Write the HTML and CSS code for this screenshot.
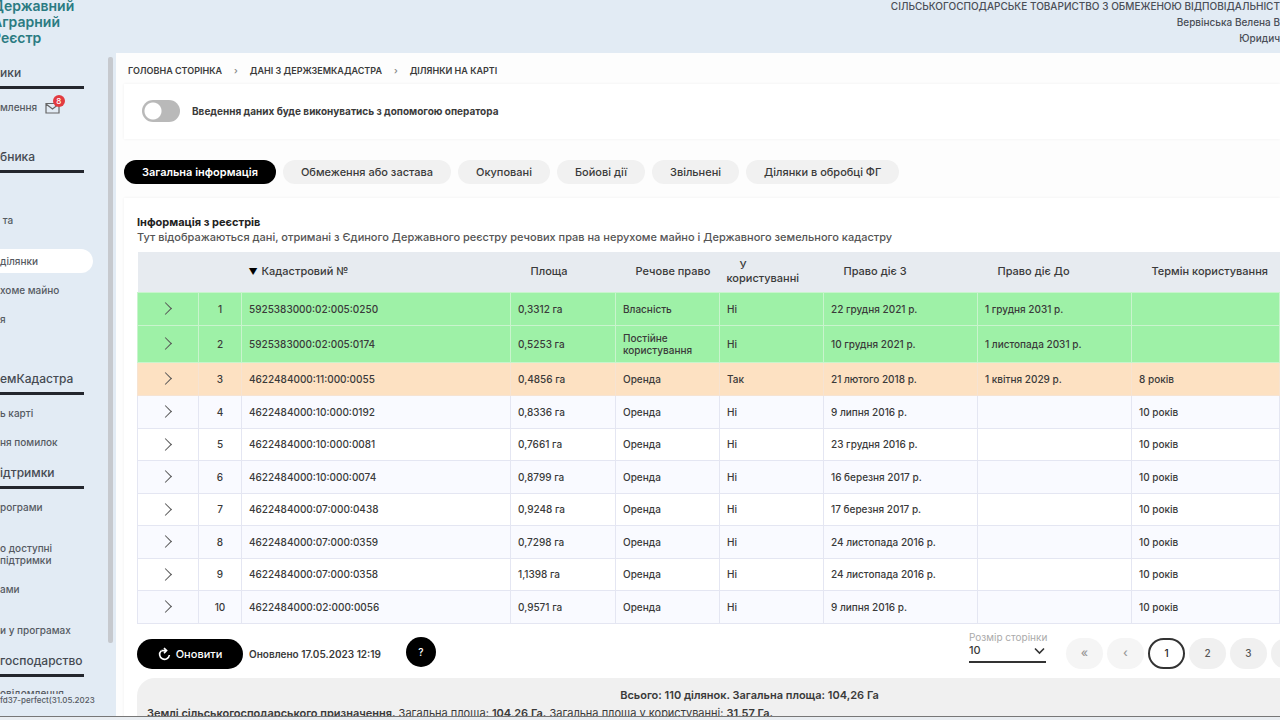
FILE: index.html
```html
<!DOCTYPE html>
<html lang="uk">
<head>
<meta charset="utf-8">
<title>Державний Аграрний Реєстр</title>
<link rel="stylesheet" href="styles.css">
</head>
<body>
<header class="header">
  <div class="brand">Державний<br>Аграрний<br>Реєстр</div>
  <div class="account">
    <div>СІЛЬСЬКОГОСПОДАРСЬКЕ ТОВАРИСТВО З ОБМЕЖЕНОЮ ВІДПОВІДАЛЬНІСТ</div>
    <div>Вервінська Велена В</div>
    <div>Юридич</div>
  </div>
</header>
<div class="body">
  <aside class="sidebar">
    <nav class="nav">
      <h2>ики</h2>
      <ul class="spaced">
        <li><a href="#">млення
          <span class="mail"><svg width="15" height="12" viewBox="0 0 15 12" fill="none" stroke="#666" stroke-width="1.2"><path d="M1 1.5h13v9.5H1zM1 2l6.5 5L14 2"/></svg><span class="badge">8</span></span></a></li>
      </ul>
      <h2>бника</h2>
      <ul>
        <li>&nbsp;</li>
        <li><a href="#">&nbsp;та<br>&nbsp;</a></li>
        <li><a class="active" href="#">ділянки</a></li>
        <li><a href="#">хоме майно</a></li>
        <li><a href="#">я</a></li>
        <li>&nbsp;</li>
      </ul>
      <h2>емКадастра</h2>
      <ul>
        <li><a href="#">ь карті</a></li>
        <li><a href="#">ня помилок</a></li>
      </ul>
      <h2>ідтримки</h2>
      <ul>
        <li><a href="#">рограми</a></li>
        <li><a href="#">&nbsp;<br>о доступні<br>підтримки</a></li>
        <li><a href="#">ами</a></li>
        <li><a href="#">&nbsp;<br>и у програмах</a></li>
      </ul>
      <h2>господарство</h2>
      <ul class="last">
        <li><a href="#">овідомлення</a></li>
      </ul>
    </nav>
    <div class="thumb"></div>
    <div class="version">fd37-perfect(31.05.2023</div>
  </aside>
  <main class="main">
    <nav class="crumbs">
      <a href="#">ГОЛОВНА СТОРІНКА</a><span>›</span><a href="#">ДАНІ З ДЕРЖЗЕМКАДАСТРА</a><span>›</span><a href="#">ДІЛЯНКИ НА КАРТІ</a>
    </nav>
    <section class="card operator">
      <label><input type="checkbox" class="switch">Введення даних буде виконуватись з допомогою оператора</label>
    </section>
    <div class="tabs">
      <button class="tab selected">Загальна інформація</button>
      <button class="tab">Обмеження або застава</button>
      <button class="tab">Окуповані</button>
      <button class="tab">Бойові дії</button>
      <button class="tab">Звільнені</button>
      <button class="tab">Ділянки в обробці ФГ</button>
    </div>
    <section class="card registry">
      <h1>Інформація з реєстрів</h1>
      <p class="lead">Тут відображаються дані, отримані з Єдиного Державного реєстру речових прав на нерухоме майно і Державного земельного кадастру</p>
      <table>
        <colgroup><col class="c-open"><col class="c-num"><col class="c-cad"><col class="c-area"><col class="c-kind"><col class="c-kind"><col class="c-date"><col class="c-date"><col></colgroup>
        <thead>
          <tr><th></th><th></th><th><i class="sort">▼</i>Кадастровий №</th><th><i class="sort"></i>Площа</th><th><i class="sort"></i>Речове право</th><th><i class="sort"></i>У<br>користуванні</th><th><i class="sort"></i>Право діє З</th><th><i class="sort"></i>Право діє До</th><th><i class="sort"></i>Термін користування</th></tr>
        </thead>
        <tbody>
          <tr class="own"><td><button class="open" aria-label="Розгорнути"></button></td><td>1</td><td>5925383000:02:005:0250</td><td>0,3312 га</td><td>Власність</td><td>Ні</td><td>22 грудня 2021 р.</td><td>1 грудня 2031 р.</td><td></td></tr>
          <tr class="own tall"><td><button class="open" aria-label="Розгорнути"></button></td><td>2</td><td>5925383000:02:005:0174</td><td>0,5253 га</td><td>Постійне користування</td><td>Ні</td><td>10 грудня 2021 р.</td><td>1 листопада 2031 р.</td><td></td></tr>
          <tr class="used"><td><button class="open" aria-label="Розгорнути"></button></td><td>3</td><td>4622484000:11:000:0055</td><td>0,4856 га</td><td>Оренда</td><td>Так</td><td>21 лютого 2018 р.</td><td>1 квітня 2029 р.</td><td>8 років</td></tr>
          <tr><td><button class="open" aria-label="Розгорнути"></button></td><td>4</td><td>4622484000:10:000:0192</td><td>0,8336 га</td><td>Оренда</td><td>Ні</td><td>9 липня 2016 р.</td><td></td><td>10 років</td></tr>
          <tr><td><button class="open" aria-label="Розгорнути"></button></td><td>5</td><td>4622484000:10:000:0081</td><td>0,7661 га</td><td>Оренда</td><td>Ні</td><td>23 грудня 2016 р.</td><td></td><td>10 років</td></tr>
          <tr><td><button class="open" aria-label="Розгорнути"></button></td><td>6</td><td>4622484000:10:000:0074</td><td>0,8799 га</td><td>Оренда</td><td>Ні</td><td>16 березня 2017 р.</td><td></td><td>10 років</td></tr>
          <tr><td><button class="open" aria-label="Розгорнути"></button></td><td>7</td><td>4622484000:07:000:0438</td><td>0,9248 га</td><td>Оренда</td><td>Ні</td><td>17 березня 2017 р.</td><td></td><td>10 років</td></tr>
          <tr><td><button class="open" aria-label="Розгорнути"></button></td><td>8</td><td>4622484000:07:000:0359</td><td>0,7298 га</td><td>Оренда</td><td>Ні</td><td>24 листопада 2016 р.</td><td></td><td>10 років</td></tr>
          <tr><td><button class="open" aria-label="Розгорнути"></button></td><td>9</td><td>4622484000:07:000:0358</td><td>1,1398 га</td><td>Оренда</td><td>Ні</td><td>24 листопада 2016 р.</td><td></td><td>10 років</td></tr>
          <tr><td><button class="open" aria-label="Розгорнути"></button></td><td>10</td><td>4622484000:02:000:0056</td><td>0,9571 га</td><td>Оренда</td><td>Ні</td><td>9 липня 2016 р.</td><td></td><td>10 років</td></tr>
        </tbody>
      </table>
      <div class="toolbar">
        <button class="refresh"><svg width="13" height="14" viewBox="0 0 13 14" fill="none" stroke="#fff" stroke-width="1.6"><path d="M3.2 3.8A4.9 4.9 0 1 0 11.4 8M6 1l2.6 2.6L6 6.2M3.4 3.6h5"/></svg>Оновити</button>
        <span class="updated">Оновлено 17.05.2023 12:19</span>
        <button class="help">?</button>
        <div class="pager">
          <div class="size">
            <label for="size">Розмір сторінки</label>
            <select id="size"><option>10</option><option>20</option><option>50</option></select>
            <svg class="caret" width="11" height="8" viewBox="0 0 11 8" fill="none" stroke="#333" stroke-width="1.6"><path d="M1 1.5l4.5 4.5L10 1.5"/></svg>
          </div>
          <button class="page off">«</button>
          <button class="page off">‹</button>
          <button class="page current">1</button>
          <button class="page">2</button>
          <button class="page">3</button>
          <button class="page" aria-label="4"></button>
        </div>
      </div>
      <div class="summary">
        <p class="total">Всього: 110 ділянок. Загальна площа: 104,26 Га</p>
        <p><b>Землі сільськогосподарського призначення.</b> Загальна площа: <b>104,26 Га.</b> Загальна площа у користуванні: <b>31,57 Га.</b></p>
      </div>
    </section>
  </main>
</div>
<footer class="edge"></footer>
</body>
</html>
```
FILE: styles.css
```css
* { box-sizing: border-box; }
body {
  margin: 0;
  height: 100vh;
  display: flex;
  flex-direction: column;
  overflow: hidden;
  background: #e2ebf4;
  color: #3a3a3a;
  font: 500 10px/12px Inter, "Noto Sans", sans-serif;
}
button, select, input { font: inherit; color: inherit; margin: 0; }
button { border: 0; padding: 0; cursor: pointer; }
a { color: inherit; text-decoration: none; }
h1, h2, p, ul { margin: 0; padding: 0; }

.header {
  display: flex;
  justify-content: space-between;
  height: 53px;
  flex: none;
  overflow: hidden;
}
.brand {
  margin: -2px 0 0 -8px;
  color: #2b7b82;
  font-size: 14px;
  font-weight: 600;
  line-height: 16px;
}
.account {
  margin-top: -2px;
  text-align: right;
  line-height: 16px;
  color: #4a4e57;
}

.body { flex: 1; min-height: 0; display: flex; }
.sidebar {
  width: 116px;
  flex: none;
  display: grid;
  grid-template-columns: 1fr 5px;
  grid-template-rows: 1fr 22px;
  padding: 4px 3px 0 0;
  color: #555a62;
}
.nav { overflow: hidden; min-height: 0; white-space: nowrap; }
.nav h2 {
  width: 84px;
  padding: 8px 0 5px;
  border-bottom: 3px solid #23262d;
  font-size: 12px;
  font-weight: 500;
  line-height: 16px;
  color: #454a52;
}
.nav ul { list-style: none; padding-top: 4px; }
.nav .spaced { padding-bottom: 18px; }
.nav .last { padding-top: 2px; }
.nav li { padding: 8px 0 9px; }
.nav a { display: block; }
.nav .active {
  width: 93px;
  margin: -6px 0;
  padding: 6px 0;
  border-radius: 0 12px 12px 0;
  background: #fff;
}
.mail { position: relative; margin-left: 5px; }
.mail svg { vertical-align: middle; }
.badge {
  position: absolute;
  top: -6px;
  left: 8px;
  width: 12px;
  height: 12px;
  border-radius: 50%;
  background: #e23b40;
  color: #fff;
  font-size: 8px;
  text-align: center;
}
.thumb { height: 92%; background: #c6c9ce; border-radius: 2px; }
.version { grid-column: 1 / 3; font-size: 8px; white-space: nowrap; }

.main { flex: 1; min-width: 0; overflow: hidden; background: #fdfdfd; padding-left: 8px; }
.crumbs {
  display: flex;
  align-items: center;
  gap: 12px;
  height: 31px;
  padding: 4px 4px 0;
  font-size: 9px;
  font-weight: 600;
}
.crumbs span { color: #888; }
.card { background: #fff; box-shadow: 0 0 3px rgba(0, 0, 0, 0.06); }
.operator { padding: 16px 18px 17px; }
.operator label { display: flex; align-items: center; gap: 12px; font-weight: 700; }
.switch {
  appearance: none;
  width: 38px;
  height: 22px;
  border-radius: 11px;
  background: radial-gradient(circle at 11px 11px, #fff 8px, #b9b9b9 9px);
}
.tabs { display: flex; gap: 7px; padding: 21px 0 14px; }
.tab {
  height: 24px;
  padding: 0 18px;
  border-radius: 12px;
  background: #f1f1f1;
  font-size: 11px;
  white-space: nowrap;
}
.tab.selected { background: #000; color: #fff; font-weight: 600; }

.registry { padding: 17px 0 0 13px; }
.registry h1 { font-size: 11px; line-height: 15px; font-weight: 700; color: #222; }
.lead { font-size: 11px; line-height: 15px; font-weight: 500; color: #555; margin-bottom: 7px; white-space: nowrap; }

table { width: 100%; table-layout: fixed; border-collapse: collapse; }
.c-open { width: 61px; }
.c-num { width: 43px; }
.c-cad { width: 269px; }
.c-area { width: 105px; }
.c-kind { width: 104px; }
.c-date { width: 154px; }
th {
  height: 40px;
  padding: 0 0 0 7px;
  background: #e7ebf0;
  font-size: 11px;
  font-weight: 500;
  line-height: 13px;
  text-align: left;
}
.sort { display: inline-block; width: 13px; font-style: normal; font-size: 9px; line-height: 11px; color: #000; }
td { height: 33px; padding: 0 7px; border: 1px solid #e4e6f2; }
td:nth-child(-n+2) { text-align: center; }
tbody tr:nth-child(even) { background: #f9faff; }
tbody tr:nth-child(odd) { background: #fff; }
tbody tr:nth-child(n+5):nth-child(odd) td { height: 32px; }
tbody tr.own { background: #9ef1a7; }
tbody tr.used { background: #fde1c2; }
.own td { border-color: #c9f4cd; }
.used td { border-color: #f6e3d2; }
tbody .tall td { height: 37px; }
.open { width: 16px; height: 16px; background: none; vertical-align: middle; }
.open::before {
  content: "";
  display: block;
  width: 8px;
  height: 8px;
  margin-left: 1px;
  border: solid #555;
  border-width: 1px 1px 0 0;
  transform: rotate(45deg);
}

.toolbar { display: flex; align-items: center; padding: 8px 0; height: 54px; }
.refresh {
  display: flex;
  align-items: center;
  justify-content: center;
  gap: 5px;
  width: 106px;
  height: 30px;
  margin-top: 6px;
  border-radius: 15px;
  background: #000;
  color: #fff;
  font-size: 11px;
}
.updated { margin: 6px 25px 0 6px; font-weight: 600; }
.help { width: 30px; height: 30px; margin-top: 2px; border-radius: 50%; background: #000; color: #fff; }
.pager { display: flex; align-items: center; gap: 4px; margin: 5px -28px 0 auto; }
.size { position: relative; width: 77px; margin: 0 16px 12px 0; white-space: nowrap; }
.size label { display: block; color: #aaa; font-weight: 400; }
.size select {
  display: block;
  appearance: none;
  width: 100%;
  height: 20px;
  padding: 0 0 4px;
  border: 0;
  border-bottom: 2px solid #333;
  border-radius: 0;
  background: none;
  font-size: 11px;
}
.caret { position: absolute; right: 1px; top: 16px; }
.page { width: 37px; height: 31px; border-radius: 16px; background: #f0f0f0; color: #555; }
.page.off { color: #999; background: #f5f5f5; font-size: 12px; }
.page.current { background: #fff; border: 2px solid #333; color: #222; }
.summary {
  padding: 10px 0 24px 10px;
  border-radius: 18px 0 0 0;
  background: #f0f0f0;
  font-size: 11px;
  line-height: 14px;
  font-weight: 400;
}
.summary b { font-weight: 600; }
.summary .total { margin-bottom: 4px; padding-left: 72px; font-weight: 600; text-align: center; }
.edge { flex: none; height: 4px; border-top: 1px solid #777; background: #e9edf1; }
```
